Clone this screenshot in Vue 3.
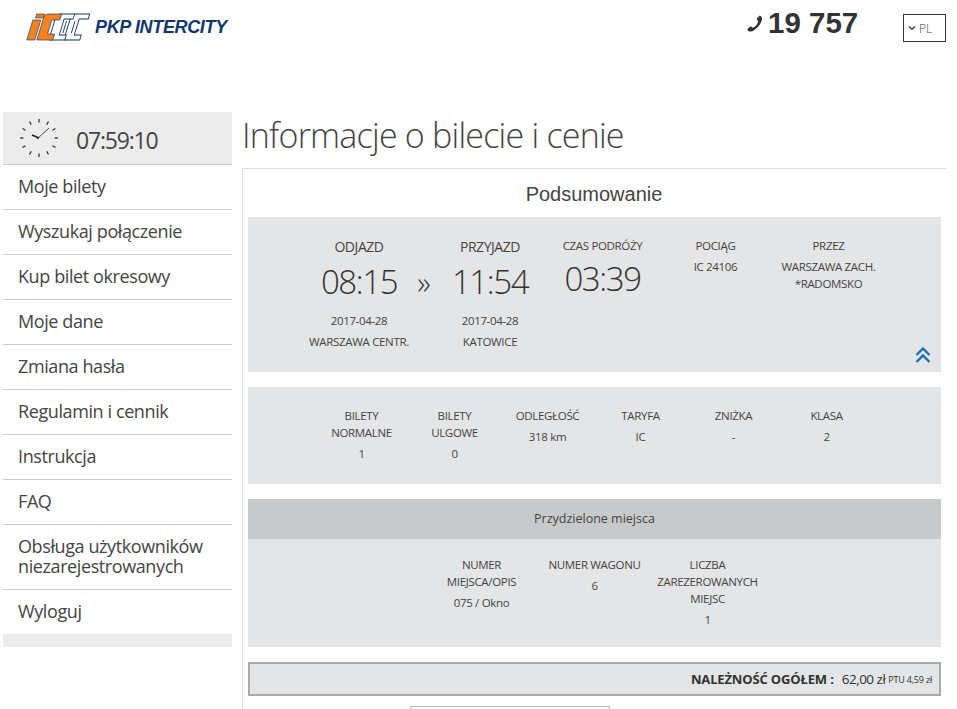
<template>
  <div class="page">
    <header class="top">
      <div class="logo">
        <svg class="mark" width="64" height="28" viewBox="0 0 64 28">
          <g transform="translate(8 0) skewX(-17)">
            <g fill="#fff" stroke="#12356b" stroke-width="0.900">
              <path d="M41 1H56V6H47V22H54V27H39L38 24V4z"/>
              <path d="M43.500 8v12M28 9v11"/>
              <path d="M26 1H41V6H32V22H39V27H24L23 24V4z"/>
              <path d="M35 8v12"/>
            </g>
            <g fill="#f58220" stroke="#12356b" stroke-width="0.600">
              <path d="M3 1h8v4H3z"/>
              <path d="M1 7h8v20H1z"/>
              <path d="M13 1H28V7H20V21H27V27H11V4z"/>
            </g>
          </g>
        </svg>
        <span class="brand">PKP INTERCITY</span>
      </div>
      <div class="contact">
        <svg class="phone" width="17" height="17" viewBox="0 0 16 16">
          <path d="M12 .5c2.500 1 2.500 3.500 1.500 5.500C12 10 8 14 4 15.500c-2.500.5-4-.5-3.500-2.500L3.500 10.500l2 1.500C8 11 10 8.500 10.500 6L9 3.500z" fill="#333"/>
        </svg>
        <span class="number">19 757</span>
      </div>
      <div class="lang">
        <svg width="8" height="6" viewBox="0 0 8 6"><path d="M1 1.500l3 3 3-3" fill="none" stroke="#333" stroke-width="1.200"/></svg>
        <span>PL</span>
      </div>
    </header>

    <div class="body">
      <aside class="side">
        <div class="clock">
          <svg width="40" height="40" viewBox="0 0 40 40">
            <g stroke="#333" stroke-width="1.300">
              <line v-for="t in ticks" :key="t.k" :x1="t.x1" :y1="t.y1" :x2="t.x2" :y2="t.y2" />
            </g>
            <path d="M20 20l-7-3" stroke="#222" stroke-width="1.500" fill="none"/>
            <path d="M18 21L30 10" stroke="#222" stroke-width="0.800" fill="none"/>
          </svg>
          <span>07:59:10</span>
        </div>
        <nav class="menu">
          <a v-for="m in menu" :key="m" class="item">{{ m }}</a>
        </nav>
        <div class="side-foot"></div>
      </aside>

      <main class="main">
        <h1>Informacje o bilecie i cenie</h1>
        <section class="panel">
          <h2>Podsumowanie</h2>

          <div class="box trip">
            <div class="col c1">
              <div class="lab big">ODJAZD</div>
              <div class="time">08:15</div>
              <div class="val d">2017-04-28</div>
              <div class="val d2">WARSZAWA CENTR.</div>
            </div>
            <div class="arrow">»</div>
            <div class="col c2">
              <div class="lab big">PRZYJAZD</div>
              <div class="time">11:54</div>
              <div class="val d">2017-04-28</div>
              <div class="val d2">KATOWICE</div>
            </div>
            <div class="col c3 small">
              <div class="lab">CZAS PODRÓŻY</div>
              <div class="time t2">03:39</div>
            </div>
            <div class="col c3 small">
              <div class="lab">POCIĄG</div>
              <div class="val v1">IC 24106</div>
            </div>
            <div class="col c3 small">
              <div class="lab">PRZEZ</div>
              <div class="val v1">WARSZAWA ZACH.</div>
              <div class="val v2">*RADOMSKO</div>
            </div>
            <svg class="up" width="16" height="16" viewBox="0 0 16 16">
              <path d="M1.500 8l6.500-6.500L14.500 8M1.500 15L8 8.500 14.500 15" fill="none" stroke="#1a6fb0" stroke-width="2.300"/>
            </svg>
          </div>

          <div class="box info">
            <div v-for="c in info" :key="c.l" class="col">
              <div class="lab" v-html="c.l"></div>
              <div class="val v1">{{ c.v }}</div>
            </div>
          </div>

          <div class="seat-head">Przydzielone miejsca</div>
          <div class="box seats">
            <div v-for="c in seats" :key="c.l" class="col">
              <div class="lab" v-html="c.l"></div>
              <div class="val v1">{{ c.v }}</div>
            </div>
          </div>

          <div class="total">
            <b>NALEŻNOŚĆ OGÓŁEM :</b>
            <span class="sum">62,00 zł</span>
            <span class="ptu">PTU 4,59 zł</span>
          </div>
          <div class="btn"></div>
        </section>
      </main>
    </div>
  </div>
</template>

<script setup>
const menu = ['Moje bilety', 'Wyszukaj połączenie', 'Kup bilet okresowy', 'Moje dane', 'Zmiana hasła', 'Regulamin i cennik', 'Instrukcja', 'FAQ', 'Obsługa użytkowników niezarejestrowanych', 'Wyloguj']
const info = [
  { l: 'BILETY<br>NORMALNE', v: '1' },
  { l: 'BILETY<br>ULGOWE', v: '0' },
  { l: 'ODLEGŁOŚĆ', v: '318 km' },
  { l: 'TARYFA', v: 'IC' },
  { l: 'ZNIŻKA', v: '-' },
  { l: 'KLASA', v: '2' }
]
const seats = [
  { l: 'NUMER<br>MIEJSCA/OPIS', v: '075 / Okno' },
  { l: 'NUMER WAGONU', v: '6' },
  { l: 'LICZBA<br>ZAREZEROWANYCH<br>MIEJSC', v: '1' }
]
const ticks = Array.from({ length: 12 }, (_, i) => {
  const a = (i * Math.PI) / 6
  return {
    k: i,
    x1: 20 + 15.5 * Math.sin(a),
    y1: 20 - 15.5 * Math.cos(a),
    x2: 20 + 19 * Math.sin(a),
    y2: 20 - 19 * Math.cos(a)
  }
})
</script>

<style>
html, body { margin: 0; background: #fff; overflow: hidden; }
</style>

<style scoped>
.page {
  width: 957px;
  height: 709px;
  overflow: hidden;
  font-family: "Open Sans", "Liberation Sans", sans-serif;
  color: #444;
  background: #fff;
}
.top {
  height: 112px;
  display: flex;
  align-items: flex-start;
}
.logo {
  display: flex;
  align-items: center;
  gap: 5px;
  margin: 13px 0 0 26px;
  width: 204px;
}
.mark { flex: none; }
.brand {
  font: italic bold 18px "Liberation Sans", sans-serif;
  color: #12356b;
  letter-spacing: -0.350px;
  white-space: nowrap;
}
.contact {
  display: flex;
  align-items: center;
  gap: 4px;
  margin: 5px 0 0 517px;
  width: 156px;
}
.number {
  font: bold 29.500px "Liberation Sans", sans-serif;
  color: #333;
  line-height: 36px;
}
.lang {
  margin: 14px 0 0 0;
  width: 37px;
  height: 26px;
  border: 1px solid #333;
  display: flex;
  align-items: center;
  gap: 3px;
  padding-left: 4px;
  font-size: 12px;
  font-weight: 300;
  color: #444;
}
.body { display: flex; align-items: flex-start; padding-left: 3px; }
.side { width: 229px; flex: none; }
.clock {
  height: 52px;
  background: #ececec;
  border-bottom: 1px solid #ccc;
  display: flex;
  align-items: center;
  padding-left: 16px;
  gap: 17px;
  font-size: 23px;
  color: #444;
  letter-spacing: -1.200px;
}
.clock span { margin-top: 4px; }
.menu { display: flex; flex-direction: column; }
.item {
  display: block;
  padding: 11px 15px 13px;
  font-size: 18px;
  line-height: 20px;
  letter-spacing: -0.400px;
  color: #444;
  border-bottom: 1px solid #ccc;
}
.item:last-child { border-bottom: 0; }
.side-foot { height: 13px; background: #ececec; margin-top: 0; }
.main { margin-left: 10px; width: 704px; }
h1 {
  margin: 0;
  height: 56px;
  font-size: 34px;
  font-weight: 300;
  line-height: 47px;
  letter-spacing: -0.780px;
  color: #444;
}
.panel {
  border-top: 1px solid #ddd;
  border-left: 1px solid #ddd;
  padding: 0 5px 0 5px;
}
h2 {
  margin: 0;
  height: 48px;
  font: 400 20px/50px "Liberation Sans", sans-serif;
  text-align: center;
  color: #444;
  padding-right: 1px;
}
.box { background: #e4e5e7; display: flex; position: relative; box-sizing: border-box; }
.col { text-align: center; font-size: 11.500px; letter-spacing: -0.330px; color: #444; flex: none; white-space: nowrap; }
.lab { line-height: 17px; }
.val { line-height: 17px; }
.trip { height: 155px; padding: 21px 0 0 61px; }
.c1 { width: 100px; }
.c2 { width: 102px; }
.c3 { width: 113px; }
.small { margin-top: -1px; }
.c2 + .c3 { margin-left: 5px; }
.big { font-size: 14px; line-height: 18px; letter-spacing: -0.450px; }
.time { font-size: 33px; font-weight: 300; line-height: 44px; color: #333; margin-top: 4px; letter-spacing: -1.400px; }
.t2 { margin-top: 3px; }
.d { margin-top: 8px; }
.d2 { margin-top: 4px; }
.arrow { width: 30px; text-align: center; font-size: 31px; line-height: 30px; margin-top: 29px; color: #333; font-weight: 300; }
.v1 { margin-top: 4px; }
.v2 { margin-top: 0; }
.up { position: absolute; right: 10px; bottom: 9px; }
.info { height: 97px; margin-top: 15px; padding: 20px 0 0 67px; }
.info .col { width: 93px; }
.seat-head {
  margin-top: 15px;
  height: 40px;
  background: #c8c9cb;
  text-align: center;
  font-size: 12.500px;
  line-height: 40px;
  color: #444;
}
.seats { height: 108px; padding: 17px 0 0 177px; }
.seats .col { width: 113px; }
.total {
  margin-top: 15px;
  height: 34px;
  box-sizing: border-box;
  border: 2px solid #aaa;
  background: #e4e5e7;
  display: flex;
  justify-content: flex-end;
  align-items: center;
  padding-right: 7px;
  color: #333;
  font-size: 13px;
}
.total b { font-weight: 700; letter-spacing: -0.150px; }
.sum { margin-left: 8px; font-size: 13.500px; font-weight: 400; letter-spacing: -0.500px; }
.ptu { margin-left: 3px; font-size: 9px; font-weight: 400; letter-spacing: -0.200px; }
.btn {
  width: 198px;
  height: 30px;
  border: 1px solid #bbb;
  margin: 10px 0 0 162px;
}
</style>
